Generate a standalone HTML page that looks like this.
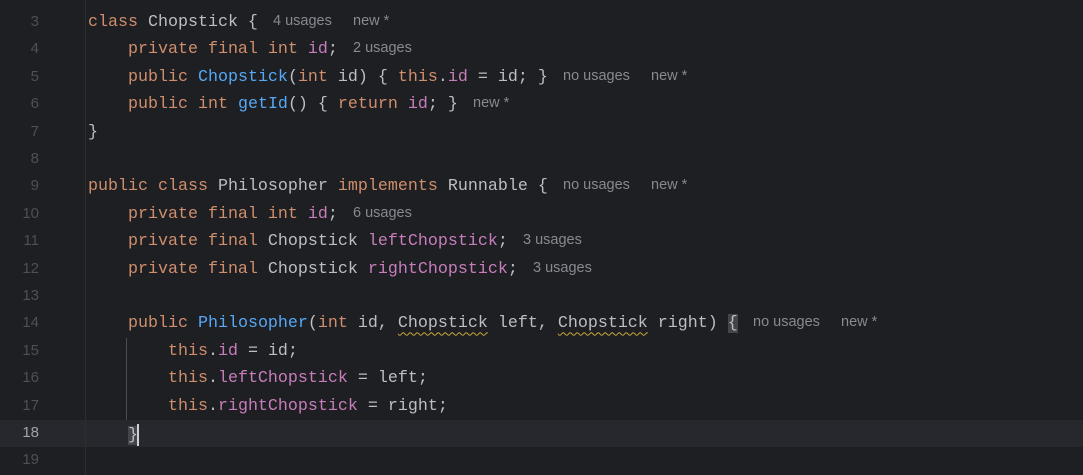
<!DOCTYPE html>
<html><head><meta charset="utf-8"><style>
html,body{margin:0;padding:0;background:#1e1f22;width:1083px;height:475px;overflow:hidden}
.l{position:absolute;left:0;width:1083px;height:27.4px;line-height:27.4px}
.n{position:absolute;top:4px;left:0;width:39px;text-align:right;font:15px "Liberation Sans",sans-serif;color:#4b5059}
.c{position:absolute;top:4px;left:88px;white-space:pre;font:16.67px "Liberation Mono",monospace;color:#bcbec4}
.h{position:absolute;top:4px;font:14.5px "Liberation Sans",sans-serif;color:#868a91;white-space:pre}
.k{color:#cf8e6d}.m{color:#56a8f5}.f{color:#c77dbb}
.w{text-decoration:underline wavy #c9a93c;text-underline-offset:4px;text-decoration-thickness:1px}
.sep{position:absolute;left:85px;top:0;width:1px;height:475px;background:#2b2d30}
.cur{background:#26282e}
</style></head><body>
<div class="l cur" style="top:420px"></div>
<div class="sep"></div>
<div style="position:absolute;left:126px;top:338px;width:1px;height:82px;background:#4a4c52"></div>
<div class="l" style="top:9px"><span class="n">3</span><span class="c"><span class="k">class</span> Chopstick {</span><span class="h" style="left:273px">4 usages</span><span class="h" style="left:353px">new *</span></div>
<div class="l" style="top:36.4px"><span class="n">4</span><span class="c">    <span class="k">private final int</span> <span class="f">id</span>;</span><span class="h" style="left:353px">2 usages</span></div>
<div class="l" style="top:63.8px"><span class="n">5</span><span class="c">    <span class="k">public</span> <span class="m">Chopstick</span>(<span class="k">int</span> id) { <span class="k">this</span>.<span class="f">id</span> = id; }</span><span class="h" style="left:563px">no usages</span><span class="h" style="left:651px">new *</span></div>
<div class="l" style="top:91.2px"><span class="n">6</span><span class="c">    <span class="k">public int</span> <span class="m">getId</span>() { <span class="k">return</span> <span class="f">id</span>; }</span><span class="h" style="left:473px">new *</span></div>
<div class="l" style="top:118.6px"><span class="n">7</span><span class="c">}</span></div>
<div class="l" style="top:146px"><span class="n">8</span></div>
<div class="l" style="top:173.4px"><span class="n">9</span><span class="c"><span class="k">public class</span> Philosopher <span class="k">implements</span> Runnable {</span><span class="h" style="left:563px">no usages</span><span class="h" style="left:651px">new *</span></div>
<div class="l" style="top:200.8px"><span class="n">10</span><span class="c">    <span class="k">private final int</span> <span class="f">id</span>;</span><span class="h" style="left:353px">6 usages</span></div>
<div class="l" style="top:228.2px"><span class="n">11</span><span class="c">    <span class="k">private final</span> Chopstick <span class="f">leftChopstick</span>;</span><span class="h" style="left:523px">3 usages</span></div>
<div class="l" style="top:255.6px"><span class="n">12</span><span class="c">    <span class="k">private final</span> Chopstick <span class="f">rightChopstick</span>;</span><span class="h" style="left:533px">3 usages</span></div>
<div class="l" style="top:283px"><span class="n">13</span></div>
<div class="l" style="top:310.4px"><span class="n">14</span><span class="c">    <span class="k">public</span> <span class="m">Philosopher</span>(<span class="k">int</span> id, <span class="w">Chopstick</span> left, <span class="w">Chopstick</span> right) <span style="background:#43454a">{</span></span><span class="h" style="left:753px">no usages</span><span class="h" style="left:841px">new *</span></div>
<div class="l" style="top:337.8px"><span class="n">15</span><span class="c">        <span class="k">this</span>.<span class="f">id</span> = id;</span></div>
<div class="l" style="top:365.2px"><span class="n">16</span><span class="c">        <span class="k">this</span>.<span class="f">leftChopstick</span> = left;</span></div>
<div class="l" style="top:392.6px"><span class="n">17</span><span class="c">        <span class="k">this</span>.<span class="f">rightChopstick</span> = right;</span></div>
<div class="l" style="top:420px"><span class="n" style="color:#a1a3ab">18</span><span class="c">    <span style="background:#43454a">}</span><span style="display:inline-block;width:2px;height:22px;background:#ced0d6;vertical-align:middle;margin-left:-1px"></span></span></div>
<div class="l" style="top:447.4px"><span class="n">19</span></div>
</body></html>
